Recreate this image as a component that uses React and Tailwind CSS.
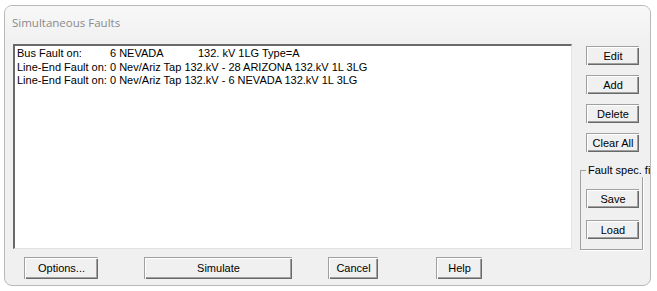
import React from 'react'

const ui = { fontFamily: '"Liberation Sans", Arial, sans-serif' }

function Btn({ label, className = '' }) {
  return (
    <button
      style={ui}
      className={`flex items-center justify-center bg-[#f0f0f0] text-[11px] text-black border-t border-l border-[#a0a0a0] shadow-[inset_1px_1px_#ffffff,inset_-1px_-1px_#696969,inset_-2px_-2px_#a0a0a0] ${className}`}
    >
      {label}
    </button>
  )
}

const rows = [
  ['Bus Fault on:', '6 NEVADA', '132. kV 1LG Type=A'],
  ['Line-End Fault on:', '0 Nev/Ariz Tap 132.kV - 28 ARIZONA 132.kV 1L 3LG'],
  ['Line-End Fault on:', '0 Nev/Ariz Tap 132.kV - 6 NEVADA 132.kV 1L 3LG'],
]

export default function App() {
  return (
    <div className="w-[657px] h-[291px] bg-white pt-[5px] pl-[4px] overflow-hidden">
      <div className="w-[647px] h-[281px] border border-[#b9b9b9] rounded-[8px] bg-[#f0f0f0] flex flex-col overflow-hidden">
        {/* title */}
        <div className="h-[38px] pl-[7px] flex items-center bg-gradient-to-b from-[#f8f8f8] to-[#f0f0f0]">
          <span style={{ fontFamily: '"Open Sans", "Noto Sans", sans-serif' }} className="text-[11.5px] text-[#8a8a8a] -mt-[5px]">
            Simultaneous Faults
          </span>
        </div>

        <div className="flex pl-[8px]">
          {/* list box */}
          <div
            style={ui}
            className="w-[559px] h-[205px] bg-white border-t-2 border-l-2 border-t-[#696969] border-l-[#696969] border-b border-r border-b-[#e3e3e3] border-r-[#e3e3e3] px-[2px] pt-[1px] text-[11px] leading-[13.5px] text-black"
          >
            {rows.map((r, i) => (
              <div key={i} className="flex whitespace-nowrap">
                <span className="w-[93px] shrink-0">{r[0]}</span>
                {r.length === 3 ? (
                  <>
                    <span className="w-[88px] shrink-0">{r[1]}</span>
                    <span>{r[2]}</span>
                  </>
                ) : (
                  <span>{r[1]}</span>
                )}
              </div>
            ))}
          </div>

          {/* right column */}
          <div className="flex flex-col ml-[8px] w-[70px]">
            <div className="flex flex-col gap-[10px] pl-[6px] pt-[2px]">
              <Btn label="Edit" className="w-[53px] h-[19px]" />
              <Btn label="Add" className="w-[53px] h-[19px]" />
              <Btn label="Delete" className="w-[53px] h-[19px]" />
              <Btn label="Clear All" className="w-[53px] h-[19px]" />
            </div>
            <div className="relative mt-[18px] w-[63px] h-[80px] border border-[#a0a0a0] shadow-[1px_1px_#ffffff] flex flex-col gap-[12px] pl-[5px] pt-[18px]">
              <span style={ui} className="absolute -top-[8px] left-[5px] bg-[#f0f0f0] px-[2px] text-[11px] leading-[14px] text-black whitespace-nowrap">
                Fault spec. fil
              </span>
              <Btn label="Save" className="w-[53px] h-[19px]" />
              <Btn label="Load" className="w-[53px] h-[19px]" />
            </div>
          </div>
        </div>

        {/* bottom buttons */}
        <div className="flex pl-[19px] mt-[7px]">
          <Btn label="Options..." className="w-[74px] h-[22px]" />
          <Btn label="Simulate" className="w-[148px] h-[22px] ml-[46px]" />
          <Btn label="Cancel" className="w-[50px] h-[22px] ml-[36px]" />
          <Btn label="Help" className="w-[46px] h-[22px] ml-[58px]" />
        </div>
      </div>
    </div>
  )
}
